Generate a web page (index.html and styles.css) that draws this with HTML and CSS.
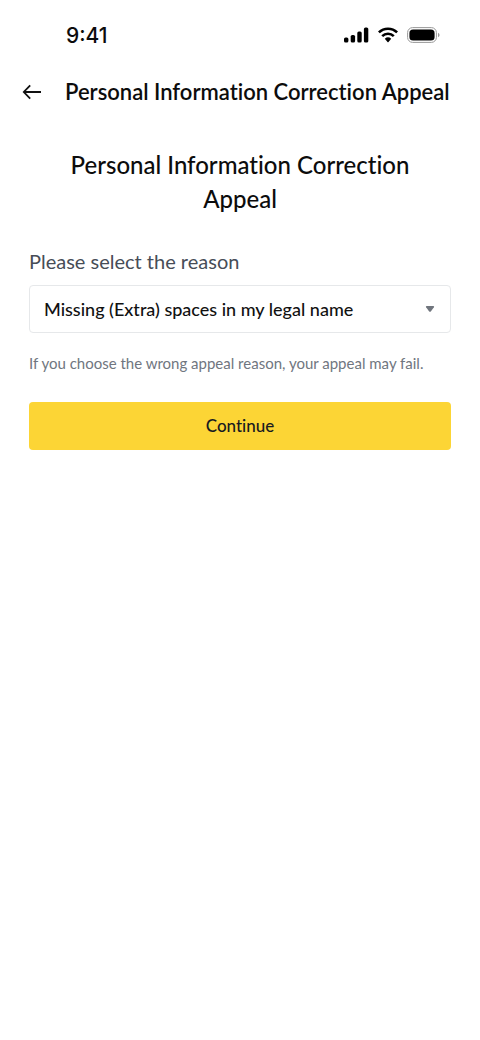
FILE: index.html
```html
<!DOCTYPE html>
<html lang="en">
<head>
<meta charset="utf-8">
<meta name="viewport" content="width=device-width, initial-scale=1">
<title>Personal Information Correction Appeal</title>
<link rel="stylesheet" href="styles.css">
</head>
<body>
<div class="status">
  <span class="time">9:41</span>
  <div class="status-icons">
    <svg width="25" height="16" viewBox="0 0 25 16" aria-hidden="true"><rect x="0" y="10.5" width="4.4" height="5" rx="1.6"/><rect x="6.7" y="8" width="4.4" height="7.5" rx="1.6"/><rect x="13.3" y="4.5" width="4.4" height="11" rx="1.6"/><rect x="19.9" y="0.5" width="4.4" height="15" rx="1.6"/></svg>
    <svg width="20" height="16" viewBox="0 0 20 16" aria-hidden="true"><g fill="none" stroke="#000" stroke-width="2.6"><path d="M.9 5.4a13 13 0 0 1 18.2 0"/><path d="M4.2 9.1a8.3 8.3 0 0 1 11.6 0"/></g><path d="M6.8 11.8a4.8 4.8 0 0 1 6.4 0L10.5 14.9q-.5.5-1 0z"/></svg>
    <svg width="33" height="16" viewBox="0 0 33 16" aria-hidden="true"><rect x=".6" y=".6" width="28.8" height="14.8" rx="5" fill="none" stroke="#999"/><rect x="2.4" y="2.4" width="25.2" height="11.2" rx="3.6"/><path d="M31 5.7q1.6 1 1.6 2.3T31 10.3z" fill="#999"/></svg>
  </div>
</div>
<header class="bar">
  <button class="back" type="button" aria-label="Back"><svg width="20" height="16" viewBox="0 0 20 16" fill="none" stroke="#111" stroke-width="1.8" aria-hidden="true"><path d="M19 8H2M8.2 1.3L1.8 8L8.2 14.7"/></svg></button>
  <h1 class="bar-title">Personal Information Correction Appeal</h1>
</header>
<main class="main">
  <h2 class="heading">Personal Information Correction Appeal</h2>
  <label class="label" for="reason">Please select the reason</label>
  <div class="select-wrap">
    <select class="select" id="reason"><option>Missing (Extra) spaces in my legal name</option></select>
    <svg class="caret" width="10" height="6" viewBox="0 0 10 6" aria-hidden="true"><path d="M1.8 0h6.4q1.4 0 .7 1.2L6 5.2q-1 1.2-2 0L1.1 1.2Q.4 0 1.8 0z" fill="#70757d"/></svg>
  </div>
  <p class="hint">If you choose the wrong appeal reason, your appeal may fail.</p>
  <button class="continue" type="button">Continue</button>
</main>
</body>
</html>
```
FILE: styles.css
```css
* { box-sizing: border-box; }
body { margin: 0; background: #fff; color: #0c0c0c; font-family: Lato, "Open Sans", sans-serif; font-variant-ligatures: none; }
.status { display: flex; justify-content: space-between; align-items: center; height: 70px; padding: 0 40px 0 66px; }
.time { padding-top: 2px; font: 500 21px/26px Inter, sans-serif; }
.status-icons { display: flex; align-items: center; gap: 9px; }
.bar { display: flex; align-items: center; height: 44px; padding: 0 20px 0 22px; gap: 23px; }
.back { display: flex; padding: 0; border: 0; background: none; }
.bar-title { margin: 0; font-size: 22px; line-height: 28px; font-weight: 600; white-space: nowrap; }
.main { padding: 34px 29px 0; }
.heading { margin: 0; padding: 0 24px; font-size: 24px; line-height: 34px; font-weight: 500; text-align: center; }
.label { display: block; margin-top: 31px; font-size: 20px; line-height: 28px; color: #474d57; }
.select-wrap { position: relative; margin-top: 10px; }
.select { display: block; width: 100%; height: 48px; padding: 0 36px 0 14px; border: 1px solid #e6e8ea; border-radius: 4px; background: #fff; color: #111; font: 500 18px/24px Lato, sans-serif; font-variant-ligatures: none; appearance: none; }
.caret { position: absolute; right: 16px; top: 21px; pointer-events: none; }
.hint { margin: 20px 0 0; font-size: 15px; line-height: 20px; color: #707680; }
.continue { display: block; width: 100%; height: 48px; margin-top: 29px; border: 0; border-radius: 4px; background: #fcd535; color: #181a20; font: 500 17px/24px Lato, sans-serif; font-variant-ligatures: none; }
```
